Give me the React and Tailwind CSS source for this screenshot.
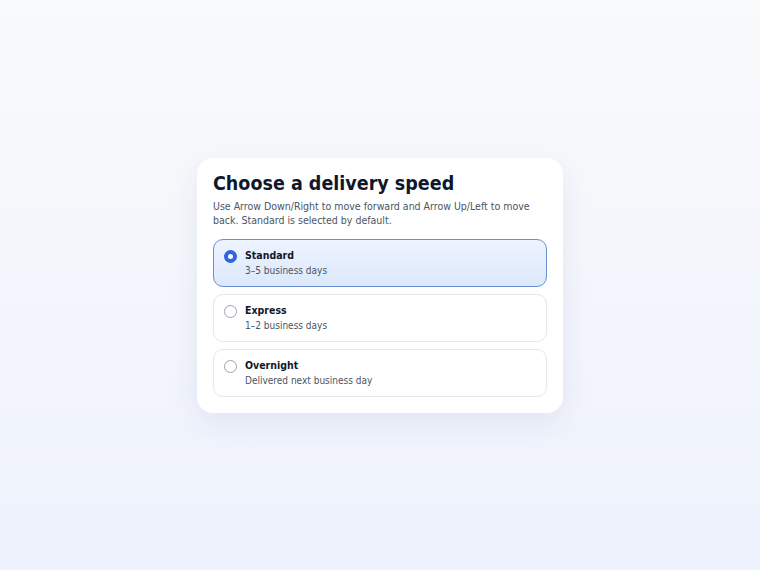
import React, { useState } from "react";

const options = [
  { id: "standard", label: "Standard", detail: "3–5 business days" },
  { id: "express", label: "Express", detail: "1–2 business days" },
  { id: "overnight", label: "Overnight", detail: "Delivered next business day" },
];

function Radio({ checked }) {
  return checked ? (
    <span className="flex h-[13px] w-[13px] shrink-0 items-center justify-center rounded-full bg-[#2f63e0]">
      <span className="block h-[5px] w-[5px] rounded-full bg-white" />
    </span>
  ) : (
    <span className="block h-[13px] w-[13px] shrink-0 rounded-full border-[1.5px] border-[#9aa3b0] bg-white" />
  );
}

export default function App() {
  const [value, setValue] = useState("standard");

  return (
    <div className="flex min-h-[570px] items-center justify-center bg-gradient-to-b from-[#f9fafb] to-[#eef2fd] font-['DejaVu_Sans_Condensed','DejaVu_Sans',sans-serif] font-stretch-condensed">
      <div className="w-[366px] rounded-2xl bg-white p-4 shadow-[0_10px_30px_rgba(40,55,110,0.08)]">
        <h1 className="text-[19.5px] font-bold leading-[20px] text-[#0f172a]">Choose a delivery speed</h1>
        <p className="mt-[5px] text-[10.5px] leading-[14px] text-[#4b5563]">
          Use Arrow Down/Right to move forward and Arrow Up/Left to move back. Standard is selected by default.
        </p>
        <div role="radiogroup" className="mt-[12px] flex flex-col gap-[7px]">
          {options.map((o) => {
            const checked = value === o.id;
            return (
              <button
                key={o.id}
                role="radio"
                aria-checked={checked}
                onClick={() => setValue(o.id)}
                className={
                  checked
                    ? "flex h-[48px] items-start gap-[8px] rounded-[10px] border border-[#6a8ed8] bg-gradient-to-b from-[#eef4ff] to-[#dce8fb] px-[10px] pt-[8px] text-left"
                    : "flex h-[48px] items-start gap-[8px] rounded-[10px] border border-[#e3e6eb] bg-white px-[10px] pt-[8px] text-left"
                }
              >
                <span className="flex pt-[2px]">
                  <Radio checked={checked} />
                </span>
                <span className="flex flex-col">
                  <span className="text-[10.5px] font-bold leading-[15px] text-[#111827]">{o.label}</span>
                  <span className="text-[10px] leading-[15px] text-[#4b5563]">{o.detail}</span>
                </span>
              </button>
            );
          })}
        </div>
      </div>
    </div>
  );
}
